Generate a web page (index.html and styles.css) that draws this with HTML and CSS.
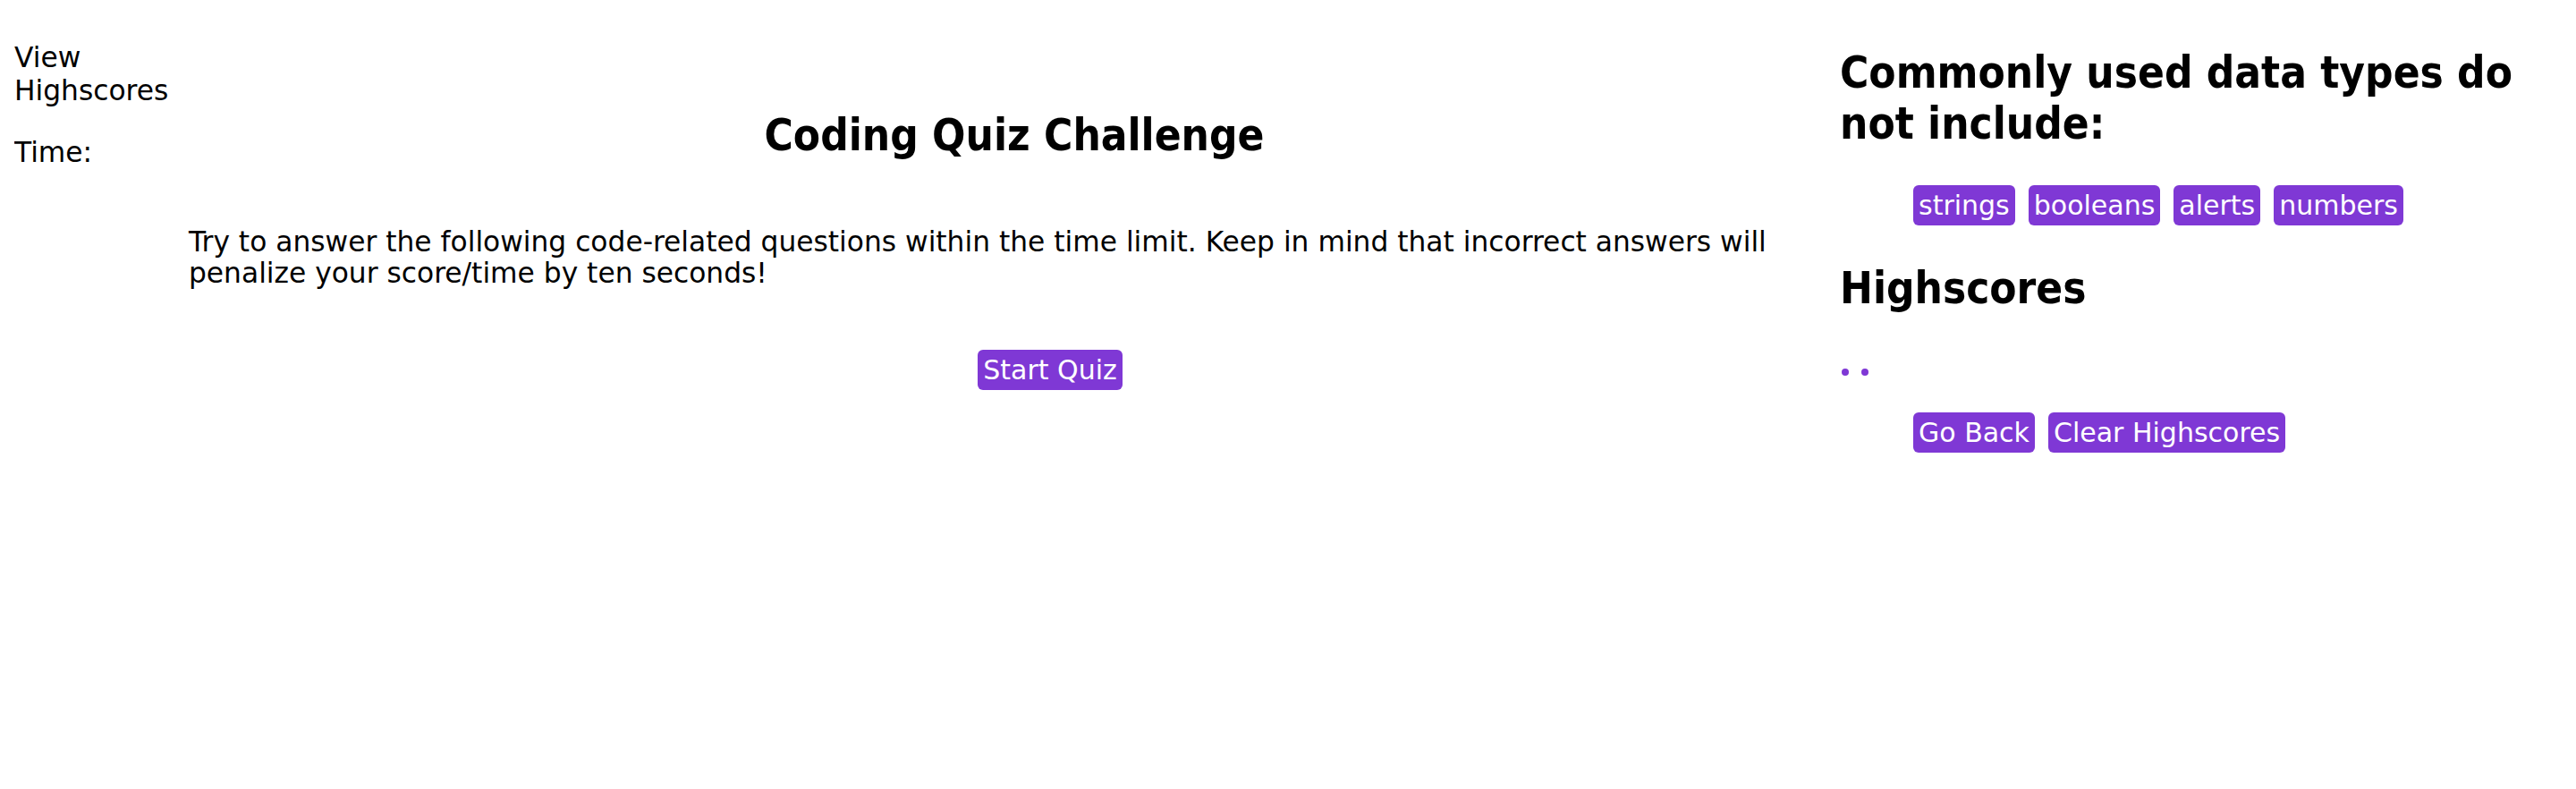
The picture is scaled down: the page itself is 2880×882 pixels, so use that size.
FILE: index.html
```html
<!DOCTYPE html>
<html lang="en">
<head>
<meta charset="utf-8">
<title>Coding Quiz Challenge</title>
<link rel="stylesheet" href="styles.css">
</head>
<body>
  <nav class="sidebar">
    <p class="nav-link">View Highscores</p>
    <p class="timer">Time: <span class="time-value"></span></p>
  </nav>
  <main class="main">
    <h1 class="title">Coding Quiz Challenge</h1>
    <p class="intro">Try to answer the following code-related questions within the time limit. Keep in mind that incorrect answers will penalize your score/time by ten seconds!</p>
    <div class="start-row">
      <button class="btn">Start Quiz</button>
    </div>
  </main>
  <aside class="panel">
    <h2 class="question">Commonly used data types do not include:</h2>
    <div class="answers">
      <button class="btn">strings</button>
      <button class="btn">booleans</button>
      <button class="btn">alerts</button>
      <button class="btn">numbers</button>
    </div>
    <h2 class="hs-title">Highscores</h2>
    <div class="dots">
      <span class="dot"></span>
      <span class="dot"></span>
    </div>
    <div class="hs-actions">
      <button class="btn">Go Back</button>
      <button class="btn">Clear Highscores</button>
    </div>
  </aside>
</body>
</html>
```
FILE: styles.css
```css
html, body {
  background: #ffffff;
}
body {
  margin: 16px;
  display: flex;
  align-items: flex-start;
  font-family: "DejaVu Sans", sans-serif;
  font-size: 31.3px;
  line-height: 37px;
  color: #000000;
}
.sidebar {
  flex: 0 0 195px;
}
.nav-link {
  margin: 30px 0 0;
}
.timer {
  margin: 32px 0 0;
}
.main {
  flex: 1 1 auto;
  min-width: 0;
}
.title {
  margin: 107px 0 0;
  font-family: "DejaVu Sans Condensed", "DejaVu Sans", sans-serif;
  font-size: 49px;
  line-height: 57px;
  font-weight: bold;
  text-align: center;
}
.intro {
  margin: 73px 0 0;
  line-height: 35px;
}
.start-row {
  margin-top: 68px;
  padding-left: 80px;
  display: flex;
  justify-content: center;
}
.panel {
  flex: 0 0 807px;
}
.question,
.hs-title {
  font-family: "DejaVu Sans Condensed", "DejaVu Sans", sans-serif;
  font-size: 49px;
  line-height: 57px;
  font-weight: bold;
}
.question {
  margin: 37px 0 0;
}
.answers,
.hs-actions {
  display: flex;
  gap: 15px;
  padding-left: 82px;
}
.answers {
  margin-top: 40px;
}
.hs-title {
  margin: 42px 0 0;
}
.dots {
  display: flex;
  gap: 14px;
  margin-top: 57px;
  padding-left: 2px;
  height: 16px;
  align-items: center;
}
.dot {
  width: 8px;
  height: 8px;
  border-radius: 50%;
  background: #7f38d5;
}
.hs-actions {
  margin-top: 37px;
}
.btn {
  font-family: inherit;
  font-size: 30px;
  line-height: 37px;
  padding: 4px 6px;
  border: none;
  border-radius: 6px;
  background: #7f38d5;
  color: #ffffff;
}
```
